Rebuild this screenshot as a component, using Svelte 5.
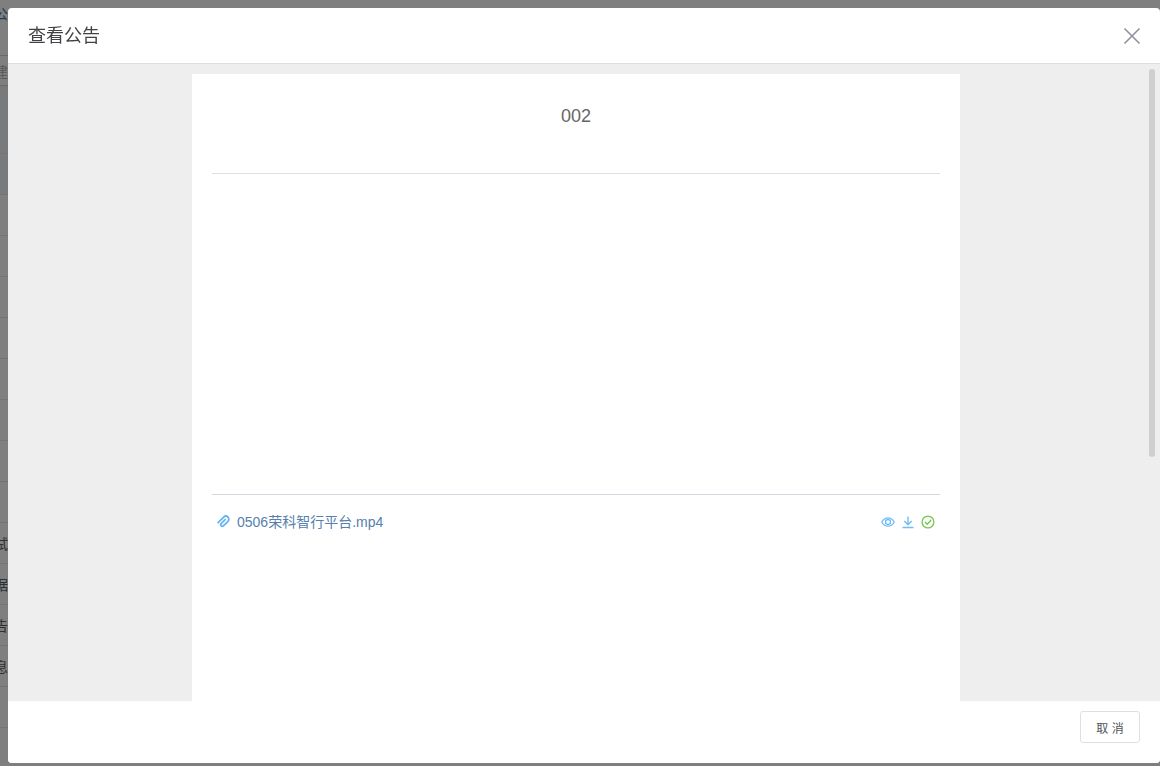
<script>
  const lowRows = ['试', '据', '告', '息', '', ''];
</script>

<div class="page">
  <div class="bg-col">
    <div class="bg-top"><span class="blue">公</span></div>
    <div class="bg-head"><span class="grey">建</span></div>
    <div class="bg-row short"></div>
    <div class="bg-row tint"></div>
    {#each Array(9) as _, i}
      <div class="bg-row" class:tint={i === 0}></div>
    {/each}
    {#each lowRows as t}
      <div class="bg-row"><span>{t}</span></div>
    {/each}
  </div>
</div>

<div class="mask"></div>

<div class="modal">
  <header class="modal-head">
    <span class="modal-title">查看公告</span>
    <button class="close" aria-label="关闭">
      <svg width="18" height="18" viewBox="0 0 18 18"><path d="M1.500 1.500l15 15M16.500 1.500l-15 15" fill="none" stroke="#8f939c" stroke-width="1.600"/></svg>
    </button>
  </header>

  <div class="modal-body">
    <article class="sheet">
      <h2 class="notice-title">002</h2>
      <div class="notice-content"></div>
      <div class="file-row">
        <svg class="clip" width="14" height="14" viewBox="0 0 14 14">
          <path transform="rotate(45 7 7) translate(-.4 1)" d="M7.200 4.200v5.600a1.600 1.600 0 0 0 3.200 0V3.400a3 3 0 0 0-6 0v8" fill="none" stroke="#62b3f5" stroke-width="1.700" stroke-linecap="round"/>
        </svg>
        <span class="file-name">0506荣科智行平台.mp4</span>
        <div class="file-actions">
          <svg width="14" height="14" viewBox="0 0 14 14">
            <path d="M.7 7C2.300 4.200 4.500 2.800 7 2.800s4.700 1.400 6.300 4.200c-1.600 2.800-3.800 4.200-6.300 4.200S2.300 9.800.7 7z" fill="none" stroke="#70bdf8" stroke-width="1.300"/>
            <circle cx="7" cy="7" r="2.500" fill="none" stroke="#70bdf8" stroke-width="1.300"/>
          </svg>
          <svg width="14" height="14" viewBox="0 0 14 14">
            <path d="M7 1.500v8M3.300 6 7 9.700 10.700 6M1.500 12.500h11" fill="none" stroke="#70bdf8" stroke-width="1.400"/>
          </svg>
          <svg width="14" height="14" viewBox="0 0 14 14">
            <circle cx="7" cy="7" r="5.900" fill="none" stroke="#74c84a" stroke-width="1.300"/>
            <path d="M4 7.100l2.200 2.200L10.200 5" fill="none" stroke="#74c84a" stroke-width="1.400"/>
          </svg>
        </div>
      </div>
    </article>
    <div class="scrollbar"></div>
  </div>

  <footer class="modal-foot">
    <button class="cancel">取 消</button>
  </footer>
</div>

<style>
  :global(body) {
    margin: 0;
    overflow: hidden;
    background: #fff;
    font-family: "Liberation Sans", "Noto Sans CJK SC", sans-serif;
  }

  .page {
    height: 766px;
    overflow: hidden;
  }

  .bg-col {
    width: 8px;
    overflow: hidden;
    font-size: 14px;
    color: #606266;
    white-space: nowrap;
  }

  .bg-top {
    height: 55px;
    display: flex;
    justify-content: flex-end;
    padding-top: 3px;
    box-sizing: border-box;
  }

  .bg-head {
    height: 31px;
    box-sizing: border-box;
    border-top: 1px solid #d5d5d5;
    border-bottom: 1px solid #d5d5d5;
    display: flex;
    justify-content: flex-end;
    align-items: center;
  }

  .bg-row {
    height: 41px;
    box-sizing: border-box;
    border-bottom: 1px solid #e9e9e9;
    display: flex;
    justify-content: flex-end;
    align-items: center;
  }

  .bg-row.short {
    height: 27px;
    background: #f2f4f8;
    border-bottom: 0;
  }

  .bg-row.tint {
    background: #f2f4f8;
  }

  .blue { color: #3f6fb0; }
  .grey { color: #b0b3b8; }

  .mask {
    position: fixed;
    inset: 0;
    background: rgba(0, 0, 0, 0.5);
  }

  .modal {
    position: fixed;
    left: 8px;
    top: 8px;
    width: 1152px;
    height: 755px;
    display: flex;
    flex-direction: column;
    background: #fff;
    border-radius: 4px;
    overflow: hidden;
  }

  .modal-head {
    height: 56px;
    flex: none;
    box-sizing: border-box;
    display: flex;
    align-items: center;
    justify-content: space-between;
    padding: 0 19px 0 20px;
    border-bottom: 1px solid #dcdfe6;
  }

  .modal-title {
    font-size: 18px;
    color: #404246;
    line-height: 24px;
  }

  .close {
    width: 18px;
    height: 18px;
    padding: 0;
    border: 0;
    background: none;
    display: flex;
    margin-top: 1px;
  }

  .modal-body {
    flex: 1;
    min-height: 0;
    position: relative;
    background: #eee;
    overflow: hidden;
    padding: 10px 16px 0 0;
    display: flex;
    justify-content: center;
  }

  .sheet {
    width: 768px;
    flex: none;
    box-sizing: border-box;
    padding: 0 20px;
    background: #fff;
  }

  .notice-title {
    margin: 0;
    height: 99px;
    border-bottom: 1px solid #dcdfe6;
    text-align: center;
    font-size: 18px;
    font-weight: 400;
    line-height: 84px;
    color: #666;
  }

  .notice-content {
    height: 320px;
    border-bottom: 1px solid #d5d8e0;
  }

  .file-row {
    display: flex;
    align-items: center;
    height: 54px;
    padding: 0 5px 2px;
    box-sizing: border-box;
    gap: 6px;
  }

  .file-name {
    font-size: 14px;
    color: #5580ad;
  }

  .file-actions {
    margin-left: auto;
    margin-top: 2px;
    display: flex;
    gap: 6px;
  }

  .scrollbar {
    position: absolute;
    right: 5px;
    top: 5px;
    width: 6px;
    height: 388px;
    border-radius: 3px;
    background: #cfcfcf;
  }

  .modal-foot {
    height: 62px;
    flex: none;
    box-sizing: border-box;
    display: flex;
    align-items: flex-start;
    justify-content: flex-end;
    padding: 10px 20px 0;
    background: #fff;
  }

  .cancel {
    width: 60px;
    height: 32px;
    padding: 0;
    font-family: inherit;
    font-size: 12px;
    color: #50535a;
    background: #fff;
    border: 1px solid #dcdfe6;
    border-radius: 3px;
  }
</style>
